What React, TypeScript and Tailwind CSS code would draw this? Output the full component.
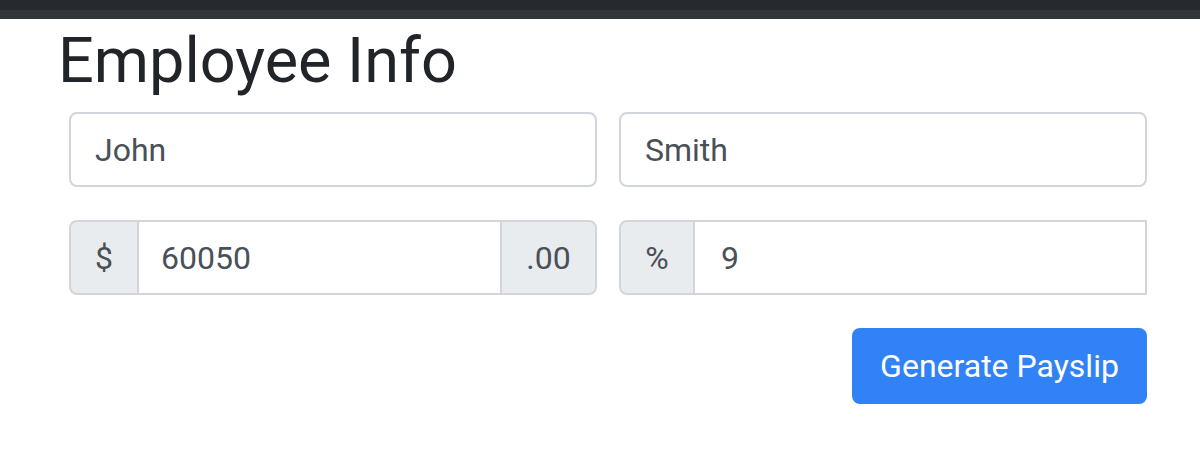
import React from "react";

const font = { fontFamily: "Roboto, 'Helvetica Neue', Arial, sans-serif" };

export default function App() {
  return (
    <div className="w-[1200px] h-[462px] bg-white overflow-hidden font-['Roboto',_'Helvetica_Neue',_Arial,_sans-serif]">
      <div className="h-[10px] bg-[#262a2f]" />
      <div className="h-[9px] bg-[#31363b]" />
      <div className="pl-[55px] pr-[53px] pt-[4px]">
        <h2 className="ml-[3px] text-[63px] leading-[76px] font-normal text-[#212529]">Employee Info</h2>
        <div className="pl-[14px] pt-[13px] flex flex-col gap-[33px]">
          <div className="flex gap-[22px]">
            <input
              defaultValue="John"
              className="w-[528px] h-[75px] border-2 border-[#d2d6dc] rounded-[8px] px-[24px] text-[32px] text-[#495057] outline-none font-['Roboto',_sans-serif]"
            />
            <input
              defaultValue="Smith"
              className="w-[528px] h-[75px] border-2 border-[#d2d6dc] rounded-[8px] px-[24px] text-[32px] text-[#495057] outline-none font-['Roboto',_sans-serif]"
            />
          </div>
          <div className="flex gap-[22px]">
            <div className="w-[528px] h-[75px] flex text-[32px] text-[#495057]">
              <div className="w-[70px] flex items-center justify-center bg-[#e9ecef] border-2 border-[#d2d6dc] rounded-l-[8px]">$</div>
              <input
                defaultValue="60050"
                className="flex-1 min-w-0 border-y-2 border-[#d2d6dc] px-[22px] text-[32px] text-[#495057] outline-none font-['Roboto',_sans-serif]"
              />
              <div className="w-[97px] flex items-center justify-center bg-[#e9ecef] border-2 border-[#d2d6dc] rounded-r-[8px]">.00</div>
            </div>
            <div className="w-[528px] h-[75px] flex text-[32px] text-[#495057]">
              <div className="w-[76px] flex items-center justify-center bg-[#e9ecef] border-2 border-[#d2d6dc] rounded-l-[8px]">%</div>
              <input
                defaultValue="9"
                className="flex-1 min-w-0 border-y-2 border-r-2 border-[#d2d6dc] px-[26px] text-[32px] text-[#495057] outline-none font-['Roboto',_sans-serif]"
              />
            </div>
          </div>
          <div className="flex justify-end w-[1078px]">
            <button
              className="w-[295px] h-[76px] bg-[#3182f6] text-white text-[32px] rounded-[8px] font-['Roboto',_sans-serif]"
              style={font}
            >
              Generate Payslip
            </button>
          </div>
        </div>
      </div>
    </div>
  );
}
